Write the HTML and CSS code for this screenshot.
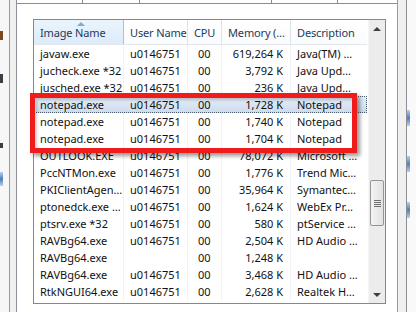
FILE: index.html
```html
<!DOCTYPE html>
<html lang="en">
<head>
    <meta charset="UTF-8">
    <meta name="viewport" content="width=device-width, initial-scale=1.0">
    <title>Windows Task Manager - Processes</title>
    <link rel="stylesheet" href="styles.css">
</head>
<body>
    <div class="screen">
        <div class="behind-left">
            <span class="smudge brown"></span>
            <span class="smudge dark"></span>
            <span class="smudge dark small"></span>
            <span class="smudge blue"></span>
        </div>
        <div class="frame"></div>
        <div class="panel">
            <div class="tabs">
                <span class="tab-edge"></span>
                <span class="tab-edge"></span>
                <span class="tab-edge"></span>
                <span class="tab-edge"></span>
            </div>
            <div class="page">
                <div class="listview">
                    <div class="grid">
                        <div class="header">
                            <div class="col sorted">Image Name<span class="sort-arrow"></span></div>
                            <div class="col">User Name</div>
                            <div class="col">CPU</div>
                            <div class="col">Memory (…</div>
                            <div class="col">Description</div>
                        </div>
                        <div class="rows">
                            <div class="row"><span>javaw.exe</span><span>u0146751</span><span class="cpu">00</span><span class="mem">619,264 K</span><span>Java(TM) …</span></div>
                            <div class="row"><span>jucheck.exe *32</span><span>u0146751</span><span class="cpu">00</span><span class="mem">3,792 K</span><span>Java Upd…</span></div>
                            <div class="row"><span>jusched.exe *32</span><span>u0146751</span><span class="cpu">00</span><span class="mem">236 K</span><span>Java Upd…</span></div>
                            <div class="row selected"><span>notepad.exe</span><span>u0146751</span><span class="cpu">00</span><span class="mem">1,728 K</span><span>Notepad</span></div>
                            <div class="row"><span>notepad.exe</span><span>u0146751</span><span class="cpu">00</span><span class="mem">1,740 K</span><span>Notepad</span></div>
                            <div class="row"><span>notepad.exe</span><span>u0146751</span><span class="cpu">00</span><span class="mem">1,704 K</span><span>Notepad</span></div>
                            <div class="row"><span>OUTLOOK.EXE</span><span>u0146751</span><span class="cpu">00</span><span class="mem">78,072 K</span><span>Microsoft …</span></div>
                            <div class="row"><span>PccNTMon.exe</span><span>u0146751</span><span class="cpu">00</span><span class="mem">1,776 K</span><span>Trend Mic…</span></div>
                            <div class="row"><span>PKIClientAgen…</span><span>u0146751</span><span class="cpu">00</span><span class="mem">35,964 K</span><span>Symantec…</span></div>
                            <div class="row"><span>ptonedck.exe …</span><span>u0146751</span><span class="cpu">00</span><span class="mem">1,624 K</span><span>WebEx Pr…</span></div>
                            <div class="row"><span>ptsrv.exe *32</span><span>u0146751</span><span class="cpu">00</span><span class="mem">580 K</span><span>ptService …</span></div>
                            <div class="row"><span>RAVBg64.exe</span><span>u0146751</span><span class="cpu">00</span><span class="mem">2,504 K</span><span>HD Audio …</span></div>
                            <div class="row"><span>RAVBg64.exe</span><span></span><span class="cpu">00</span><span class="mem">1,248 K</span><span></span></div>
                            <div class="row"><span>RAVBg64.exe</span><span>u0146751</span><span class="cpu">00</span><span class="mem">3,468 K</span><span>HD Audio …</span></div>
                            <div class="row"><span>RtkNGUI64.exe</span><span>u0146751</span><span class="cpu">00</span><span class="mem">2,628 K</span><span>Realtek H…</span></div>
                        </div>
                    </div>
                    <div class="scrollbar">
                        <div class="arrow up"></div>
                        <div class="track">
                            <div class="thumb"><span class="grip"></span></div>
                        </div>
                        <div class="arrow down"></div>
                    </div>
                </div>
                <div class="callout"></div>
            </div>
        </div>
        <div class="frame wide"></div>
        <div class="behind-right">
            <span class="smudge blue"></span>
            <span class="smudge blue"></span>
            <span class="smudge blue low"></span>
        </div>
    </div>
</body>
</html>
```

FILE: styles.css
```css
body {
    margin: 0;
    font-family: "Noto Sans", "Open Sans", sans-serif;
    font-size: 11px;
    background-color: #f4f4f4;
}
.screen {
    display: flex;
    width: 416px;
    height: 312px;
    overflow: hidden;
}
.behind-left {
    width: 9px;
    background-color: #f7f7f7;
    display: flex;
    flex-direction: column;
}
.behind-right {
    width: 9px;
    background-color: #f9f9f9;
    display: flex;
    flex-direction: column;
}
.smudge {
    display: block;
    width: 3px;
    height: 9px;
    margin-top: 31px;
}
.smudge.brown {
    background-color: #7a4a1c;
}
.smudge.dark {
    background-color: #3a3f48;
    margin-top: 34px;
}
.smudge.dark.small {
    height: 5px;
    margin-top: 60px;
}
.smudge.blue {
    background: linear-gradient(#b9d3ee, #4f7fb3, #b9d3ee);
    height: 14px;
    margin-top: 24px;
}
.behind-right .smudge.blue {
    margin-top: 110px;
    height: 16px;
}
.behind-right .smudge.blue + .smudge.blue {
    margin-top: 30px;
}
.behind-right .smudge.low {
    margin-top: 100px;
}
.frame {
    width: 6px;
    background-color: #f0f0f0;
    border-left: 1px solid #979a9f;
    border-right: 1px solid #8d9096;
}
.frame.wide {
    width: 8px;
}
.panel {
    width: 380px;
    display: flex;
    flex-direction: column;
}
.tabs {
    height: 3px;
    border-bottom: 1px solid #898c95;
    display: flex;
    background-color: #fff;
}
.tab-edge {
    width: 1px;
    background-color: #898c95;
    margin-left: 65px;
}
.tab-edge:nth-child(2) {
    margin-left: 56px;
}
.tab-edge:nth-child(3) {
    margin-left: 131px;
}
.tab-edge:nth-child(4) {
    margin-left: 65px;
}
.page {
    flex: 1;
    position: relative;
    background-color: #fff;
    padding: 15px 10px 0 16px;
}
.listview {
    width: 351px;
    height: 283px;
    border: 1px solid #828790;
    display: flex;
    background-color: #fff;
}
.grid {
    width: 333px;
}
.header,
.row {
    display: grid;
    grid-template-columns: 90px 64px 34px 69px 76px;
}
.header {
    height: 24px;
    border-bottom: 1px solid #e4e8ee;
    background: linear-gradient(#fff, #fafbfc);
    color: #1e3a5c;
    letter-spacing: -0.15px;
}
.header .col {
    position: relative;
    padding-left: 6px;
    line-height: 25px;
    border-right: 1px solid #dfe3e8;
    white-space: nowrap;
    overflow: hidden;
}
.header .col.sorted {
    background: linear-gradient(#eaf4fc, #dcecf9);
    border-right-color: #9ec6ea;
}
.header .col:last-child {
    border-right: none;
}
.sort-arrow {
    position: absolute;
    left: 43px;
    top: 2px;
    border-left: 4px solid transparent;
    border-right: 4px solid transparent;
    border-bottom: 4px solid #8fa5c0;
}
.row {
    height: 17px;
    line-height: 17px;
    color: #111;
    white-space: nowrap;
}
.row span {
    padding-left: 6px;
    overflow: hidden;
    border-right: 1px solid #f0f2f5;
}
.row span:last-child {
    border-right: none;
}
.row .cpu {
    padding-left: 10px;
}
.row .mem {
    padding-left: 0;
    padding-right: 7px;
    text-align: right;
}
.row.selected {
    background: linear-gradient(#e6eef8, #ccdcee);
    box-shadow: inset 2px 0 0 #fff;
    outline: 1px dotted #4c5c70;
    outline-offset: -1px;
}
.row.selected span {
    border-right-color: transparent;
}
.scrollbar {
    width: 17px;
    margin-left: 1px;
    display: flex;
    flex-direction: column;
    background-color: #ececec;
    border-left: 1px solid #f6f6f6;
}
.arrow {
    height: 17px;
    display: flex;
    justify-content: center;
    align-items: center;
}
.arrow::after {
    content: "";
    border-left: 4px solid transparent;
    border-right: 4px solid transparent;
}
.arrow.up::after {
    border-bottom: 4px solid #3e3e3e;
}
.arrow.down::after {
    border-top: 4px solid #3e3e3e;
}
.track {
    flex: 1;
    padding-top: 143px;
}
.thumb {
    height: 44px;
    margin: 0 1px;
    border: 1px solid #959595;
    border-radius: 2px;
    background: linear-gradient(to right, #f3f3f3, #e2e2e2);
    display: flex;
    justify-content: center;
    align-items: center;
}
.grip {
    width: 7px;
    height: 7px;
    background: repeating-linear-gradient(#6f6f6f 0 1px, transparent 1px 2px);
}
.callout {
    position: absolute;
    left: 13px;
    top: 89px;
    width: 317px;
    height: 50px;
    border: 5px solid #f01c1c;
    box-shadow: 3px 3px 4px rgba(0, 0, 0, 0.4), inset 2px 2px 3px rgba(0, 0, 0, 0.2);
}
```
